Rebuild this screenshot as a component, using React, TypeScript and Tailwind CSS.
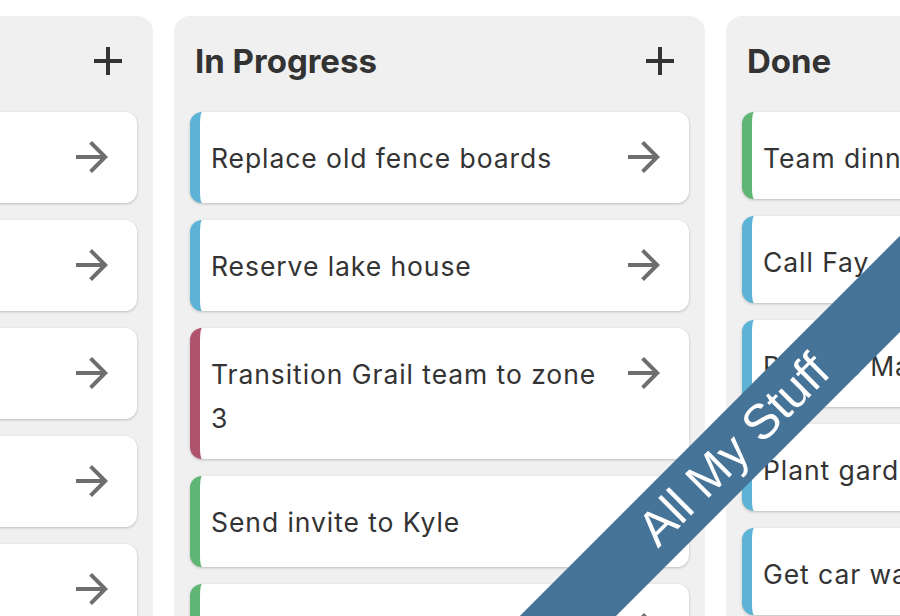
import React from 'react';
import { MdAdd, MdArrowForward } from 'react-icons/md';

interface Card {
    text: string;
    color: string;
}

interface Column {
    title: string;
    cards: Card[];
    movable: boolean;
}

const COLUMNS: Column[] = [
    {
        title: 'To Do',
        movable: true,
        cards: [
            { text: 'Fix garage door', color: 'border-l-[#5db3d5]' },
            { text: 'Book flights', color: 'border-l-[#5db3d5]' },
            { text: 'Renew passport', color: 'border-l-[#b0546e]' },
            { text: 'Clean gutters', color: 'border-l-[#5fb574]' },
            { text: 'Pay water bill', color: 'border-l-[#5db3d5]' },
        ],
    },
    {
        title: 'In Progress',
        movable: true,
        cards: [
            { text: 'Replace old fence boards', color: 'border-l-[#5db3d5]' },
            { text: 'Reserve lake house', color: 'border-l-[#5db3d5]' },
            { text: 'Transition Grail team to zone 3', color: 'border-l-[#b0546e]' },
            { text: 'Send invite to Kyle', color: 'border-l-[#5fb574]' },
            { text: 'Order new chairs', color: 'border-l-[#5fb574]' },
        ],
    },
    {
        title: 'Done',
        movable: false,
        cards: [
            { text: 'Team dinner', color: 'border-l-[#5fb574]' },
            { text: 'Call Fay about trip', color: 'border-l-[#5db3d5]' },
            { text: 'Pick up Mail', color: 'border-l-[#5db3d5]' },
            { text: 'Plant garden', color: 'border-l-[#5db3d5]' },
            { text: 'Get car washed', color: 'border-l-[#5db3d5]' },
        ],
    },
];

const TaskCard: React.FC<{ card: Card; movable: boolean }> = ({ card, movable }) => (
    <div
        className={`flex items-start gap-[14px] bg-white rounded-[12px] border-l-[10px] ${card.color} pl-[11px] pr-[21px] py-[21.67px] shadow-[0_1px_3px_rgba(0,0,0,0.22)]`}
    >
        <p className="flex-1 translate-y-[2px] text-[26.5px] leading-[44px] tracking-[0.035em] text-[#333]">
            {card.text}
        </p>
        {movable && (
            <button className="w-[48px] h-[48px] shrink-0 -translate-y-[1px] text-[#6e6e6e]">
                <MdArrowForward size={48} />
            </button>
        )}
    </div>
);

const BoardColumn: React.FC<{ column: Column }> = ({ column }) => (
    <section className="w-[531px] shrink-0 bg-[#f0f0f0] rounded-[16px] pb-6">
        <header className="flex items-center justify-between h-[48px] mx-[21px] mt-[21px]">
            <h2 className="text-[33px] leading-[48px] font-bold text-[#333]">{column.title}</h2>
            {column.movable && (
                <button className="w-[48px] h-[48px] text-[#333]">
                    <MdAdd size={48} />
                </button>
            )}
        </header>
        <div className="flex flex-col gap-[16.67px] px-[16px] pt-[27px]">
            {column.cards.map((card) => (
                <TaskCard key={card.text} card={card} movable={column.movable} />
            ))}
        </div>
    </section>
);

export default function App() {
    return (
        <div className="relative w-[900px] h-[616px] overflow-hidden bg-white font-['Inter',sans-serif]">
            <div className="flex gap-[21px] ml-[-378px] pt-[16px]">
                {COLUMNS.map((column) => (
                    <BoardColumn key={column.title} column={column} />
                ))}
            </div>
            {/* corner ribbon */}
            <div className="absolute left-[233.5px] top-[416.3px] w-[1000px] h-[68.4px] -rotate-45 bg-[#467398] flex items-center justify-center">
                <span className="text-white text-[49px] font-['Liberation_Sans',Arial,sans-serif]">All My Stuff</span>
            </div>
        </div>
    );
}
